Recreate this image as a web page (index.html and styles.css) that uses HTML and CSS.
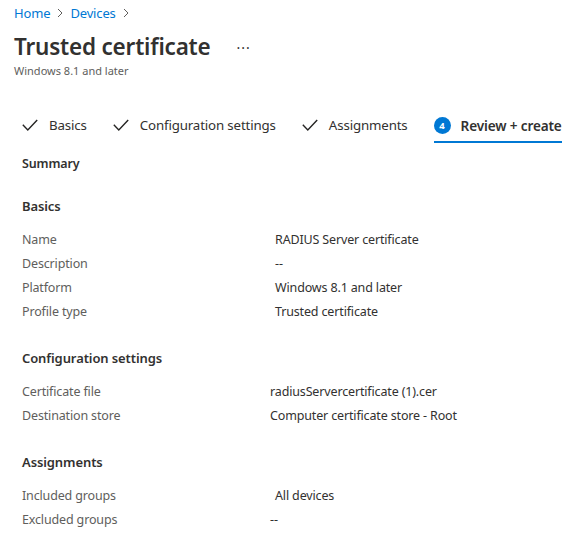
FILE: index.html
```html
<!DOCTYPE html>
<html lang="en">
<head>
<meta charset="utf-8">
<link rel="stylesheet" href="styles.css">
</head>
<body>
<div class="page">
  <nav class="crumbs">
    <a class="crumb">Home</a>
    <span class="chev"><svg width="8" height="10" viewBox="0 0 8 10"><path d="M2 1l4 4-4 4" fill="none" stroke="#605e5c" stroke-width="1"/></svg></span>
    <a class="crumb">Devices</a>
    <span class="chev"><svg width="8" height="10" viewBox="0 0 8 10"><path d="M2 1l4 4-4 4" fill="none" stroke="#605e5c" stroke-width="1"/></svg></span>
  </nav>
  <div class="titlerow">
    <h1 class="title">Trusted certificate</h1>
    <span class="more">···</span>
  </div>
  <div class="subtitle">Windows 8.1 and later</div>

  <div class="tabs">
    <div class="tab">
      <svg class="check" width="16" height="13" viewBox="0 0 16 13"><path d="M0.8 5.8l5 5.2L15.2 1" fill="none" stroke="#252423" stroke-width="1.4"/></svg>
      <span>Basics</span>
    </div>
    <div class="tab">
      <svg class="check" width="16" height="13" viewBox="0 0 16 13"><path d="M0.8 5.8l5 5.2L15.2 1" fill="none" stroke="#252423" stroke-width="1.4"/></svg>
      <span>Configuration settings</span>
    </div>
    <div class="tab">
      <svg class="check" width="16" height="13" viewBox="0 0 16 13"><path d="M0.8 5.8l5 5.2L15.2 1" fill="none" stroke="#252423" stroke-width="1.4"/></svg>
      <span>Assignments</span>
    </div>
    <div class="tab active">
      <span class="step">4</span>
      <span class="tab-label">Review + create</span>
    </div>
  </div>

  <div class="content">
    <h2 class="summary">Summary</h2>

    <section class="section">
      <h3 class="heading">Basics</h3>
      <div class="grid wide">
        <div class="label">Name</div><div class="value">RADIUS Server certificate</div>
        <div class="label">Description</div><div class="value">--</div>
        <div class="label">Platform</div><div class="value">Windows 8.1 and later</div>
        <div class="label">Profile type</div><div class="value">Trusted certificate</div>
      </div>
    </section>

    <section class="section">
      <h3 class="heading">Configuration settings</h3>
      <div class="grid">
        <div class="label">Certificate file</div><div class="value">radiusServercertificate (1).cer</div>
        <div class="label">Destination store</div><div class="value">Computer certificate store - Root</div>
      </div>
    </section>

    <section class="section">
      <h3 class="heading">Assignments</h3>
      <div class="grid">
        <div class="label">Included groups</div><div class="value indent">All devices</div>
        <div class="label">Excluded groups</div><div class="value">--</div>
      </div>
    </section>
  </div>
</div>
</body>
</html>
```

FILE: styles.css
```css
* { box-sizing: border-box; }
html, body { margin: 0; padding: 0; background: #fff; }
body {
  font-family: "Noto Sans", "Open Sans", sans-serif;
  color: #323130;
  font-size: 12.5px;
  letter-spacing: -0.15px;
}
.page { padding: 4px 14px 0 14px; }

.crumbs { display: flex; align-items: center; height: 18px; }
.crumb { color: #0078d4; font-size: 13px; line-height: 18px; }
.chev { display: inline-flex; width: 20px; justify-content: center; }

.titlerow { display: flex; align-items: center; margin-top: 9px; height: 32px; }
.title { margin: 0; font-size: 22.5px; font-weight: 600; line-height: 32px; color: #323130; letter-spacing: -0.2px; }
.more { margin-left: 26px; font-size: 14px; color: #323130; letter-spacing: 1px; }
.subtitle { font-size: 11px; color: #605e5c; line-height: 16px; letter-spacing: 0; }

.tabs { display: flex; margin-top: 30px; padding-left: 8px; height: 34px; align-items: stretch; white-space: nowrap; }
.tab { display: flex; align-items: center; gap: 11px; margin-right: 26px; font-size: 13.3px; color: #323130; border-bottom: 2px solid transparent; }
.tab .check { display: block; }
.tab.active { border-bottom-color: #0078d4; margin-right: 0; gap: 10px; }
.tab-label { font-weight: 600; font-size: 13.6px; }
.step {
  width: 17px; height: 17px; border-radius: 50%; background: #0078d4; color: #fff;
  font-size: 9.5px; font-weight: 700; display: inline-flex; align-items: center; justify-content: center; letter-spacing: 0;
}

.content { padding-left: 8px; }
.summary { margin: 11px 0 0; font-size: 12.5px; font-weight: 600; line-height: 20px; }
.section { margin-top: 22px; }
.section + .section { margin-top: 25px; }
.heading { margin: 0 0 11px; font-size: 13px; font-weight: 600; line-height: 20px; letter-spacing: -0.1px; }
.grid { display: grid; grid-template-columns: 248px 1fr; grid-auto-rows: 24px; align-items: center; }
.grid.wide { grid-template-columns: 253px 1fr; }
.label { color: #605e5c; }
.value { color: #323130; }
.value.indent { padding-left: 5px; }
```
